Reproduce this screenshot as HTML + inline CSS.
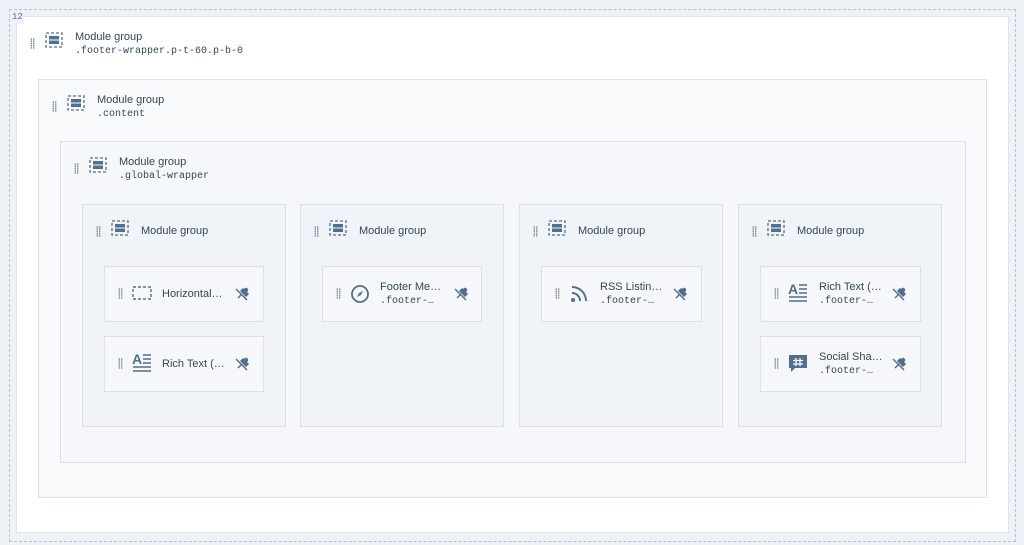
<!DOCTYPE html>
<html><head><style>
*{box-sizing:border-box;margin:0;padding:0}
body{width:1024px;height:545px;background:#eef1f5;font-family:"Liberation Sans",sans-serif;position:relative;overflow:hidden;color:#33475b}
.a{position:absolute}
.dash{left:9px;top:9px;width:1007px;height:533px;border:1px dashed #b6c2d0}
.white{left:16px;top:16px;width:993px;height:517px;background:#fff;border:1px solid #dfe3eb}
.box{border:1px solid #dbe1e8}
.t{font-size:11px;color:#33475b}
.m{font-family:"Liberation Mono",monospace;font-size:10px;color:#33475b}
.grip{width:5px;height:11px;background-image:radial-gradient(circle,#8b9aab 0.9px,transparent 1px);background-size:2.5px 2.2px}
</style></head><body>
<div class="a dash"></div>
<div class="a white"></div>
<div class="a" style="left:10px;top:10px;width:14px;height:14px;background:#eef1f5;font-family:'Liberation Mono',monospace;font-size:9px;color:#516f90;padding:2px 0 0 2px;z-index:5">12</div>
<div class="a box" style="left:38px;top:79px;width:949px;height:419px;background:#f9fafc"></div>
<div class="a box" style="left:60px;top:141px;width:906px;height:322px;background:#f5f7fa"></div>
<div class="a box" style="left:82px;top:204px;width:204px;height:223px;background:#f0f3f7"></div>
<div class="a box" style="left:300px;top:204px;width:204px;height:223px;background:#f0f3f7"></div>
<div class="a box" style="left:519px;top:204px;width:204px;height:223px;background:#f0f3f7"></div>
<div class="a box" style="left:738px;top:204px;width:204px;height:223px;background:#f0f3f7"></div>

<svg width="0" height="0" style="position:absolute"><defs>
<g id="mg"><rect x="1" y="1" width="16" height="14" fill="none" stroke="#516f90" stroke-width="1.3" stroke-dasharray="3 2"/><rect x="4" y="4" width="10" height="3.5" fill="#516f90"/><rect x="4" y="8.5" width="10" height="3.5" fill="#516f90"/></g>
<g id="pin"><path d="M3 12 L7 8 M6 5 L11 10 L13 8 L8 3 Z" fill="#516f90" stroke="#516f90" stroke-width="1.5"/><path d="M1 3 L12 14" stroke="#516f90" stroke-width="1.4"/><circle cx="11" cy="4" r="2.2" fill="#516f90"/></g>
</defs></svg>

<div class="a grip" style="left:30px;top:38px"></div>
<svg class="a" style="left:45px;top:32px" width="18" height="16"><use href="#mg"/></svg>
<div class="a t" style="left:75px;top:31px">Module group</div>
<div class="a m" style="left:75px;top:46px">.footer-wrapper.p-t-60.p-b-0</div>

<div class="a grip" style="left:52px;top:101px"></div>
<svg class="a" style="left:67px;top:95px" width="18" height="16"><use href="#mg"/></svg>
<div class="a t" style="left:97px;top:94px">Module group</div>
<div class="a m" style="left:97px;top:109px">.content</div>

<div class="a grip" style="left:74px;top:163px"></div>
<svg class="a" style="left:89px;top:157px" width="18" height="16"><use href="#mg"/></svg>
<div class="a t" style="left:119px;top:156px">Module group</div>
<div class="a m" style="left:119px;top:171px">.global-wrapper</div>

<div class="a grip" style="left:96px;top:226px"></div>
<svg class="a" style="left:111px;top:220px" width="18" height="16"><use href="#mg"/></svg>
<div class="a t" style="left:141px;top:225px">Module group</div>
<div class="a grip" style="left:314px;top:226px"></div>
<svg class="a" style="left:329px;top:220px" width="18" height="16"><use href="#mg"/></svg>
<div class="a t" style="left:359px;top:225px">Module group</div>
<div class="a grip" style="left:533px;top:226px"></div>
<svg class="a" style="left:548px;top:220px" width="18" height="16"><use href="#mg"/></svg>
<div class="a t" style="left:578px;top:225px">Module group</div>
<div class="a grip" style="left:752px;top:226px"></div>
<svg class="a" style="left:767px;top:220px" width="18" height="16"><use href="#mg"/></svg>
<div class="a t" style="left:797px;top:225px">Module group</div>

<div class="a box" style="left:104px;top:266px;width:160px;height:56px;background:#f5f7fa"></div>
<div class="a grip" style="left:118px;top:288px"></div>
<svg class="a" style="left:132px;top:286px" width="20" height="14"><rect x="1" y="1" width="18" height="12" fill="none" stroke="#516f90" stroke-width="1.4" stroke-dasharray="3 2"/></svg>
<div class="a t" style="left:162px;top:288px">Horizontal…</div>
<svg class="a" style="left:235px;top:286px" width="15" height="15"><use href="#pin"/></svg>

<div class="a box" style="left:104px;top:336px;width:160px;height:56px;background:#f5f7fa"></div>
<div class="a grip" style="left:118px;top:358px"></div>
<svg class="a" style="left:132px;top:352px" width="20" height="22"><text x="0" y="12" font-size="14" fill="#516f90" font-family="Liberation Sans" font-weight="bold">A</text><path d="M11 3h8M11 7h8M11 11h8M1 15h18M1 19h18" stroke="#516f90" stroke-width="1.4"/></svg>
<div class="a t" style="left:162px;top:358px">Rich Text (…</div>
<svg class="a" style="left:235px;top:356px" width="15" height="15"><use href="#pin"/></svg>

<div class="a box" style="left:322px;top:266px;width:160px;height:56px;background:#f5f7fa"></div>
<div class="a grip" style="left:336px;top:288px"></div>
<svg class="a" style="left:350px;top:284px" width="20" height="20"><circle cx="10" cy="10" r="8" fill="none" stroke="#516f90" stroke-width="1.8"/><path d="M13 7 L11 11 L7 13 L9 9Z" fill="#516f90"/></svg>
<div class="a t" style="left:380px;top:281px">Footer Me…</div>
<div class="a m" style="left:380px;top:296px">.footer-…</div>
<svg class="a" style="left:454px;top:286px" width="15" height="15"><use href="#pin"/></svg>

<div class="a box" style="left:541px;top:266px;width:161px;height:56px;background:#f5f7fa"></div>
<div class="a grip" style="left:555px;top:288px"></div>
<svg class="a" style="left:570px;top:284px" width="20" height="20"><circle cx="3" cy="16" r="2" fill="#516f90"/><path d="M2 9a8 8 0 0 1 8 8M2 3a14 14 0 0 1 14 14" fill="none" stroke="#516f90" stroke-width="2"/></svg>
<div class="a t" style="left:600px;top:281px">RSS Listin…</div>
<div class="a m" style="left:600px;top:296px">.footer-…</div>
<svg class="a" style="left:673px;top:286px" width="15" height="15"><use href="#pin"/></svg>

<div class="a box" style="left:760px;top:266px;width:161px;height:56px;background:#f5f7fa"></div>
<div class="a grip" style="left:774px;top:288px"></div>
<svg class="a" style="left:788px;top:282px" width="20" height="22"><text x="0" y="12" font-size="14" fill="#516f90" font-family="Liberation Sans" font-weight="bold">A</text><path d="M11 3h8M11 7h8M11 11h8M1 15h18M1 19h18" stroke="#516f90" stroke-width="1.4"/></svg>
<div class="a t" style="left:819px;top:281px">Rich Text (…</div>
<div class="a m" style="left:819px;top:296px">.footer-…</div>
<svg class="a" style="left:892px;top:286px" width="15" height="15"><use href="#pin"/></svg>

<div class="a box" style="left:760px;top:336px;width:161px;height:56px;background:#f5f7fa"></div>
<div class="a grip" style="left:774px;top:358px"></div>
<svg class="a" style="left:788px;top:354px" width="20" height="20"><path d="M1 1h18v13H7l-4 4v-4H1Z" fill="#516f90"/><path d="M8 4v8M12 4v8M5 6.5h10M5 10h10" stroke="#fff" stroke-width="1.3"/></svg>
<div class="a t" style="left:819px;top:351px">Social Sha…</div>
<div class="a m" style="left:819px;top:366px">.footer-…</div>
<svg class="a" style="left:892px;top:356px" width="15" height="15"><use href="#pin"/></svg>
</body></html>
